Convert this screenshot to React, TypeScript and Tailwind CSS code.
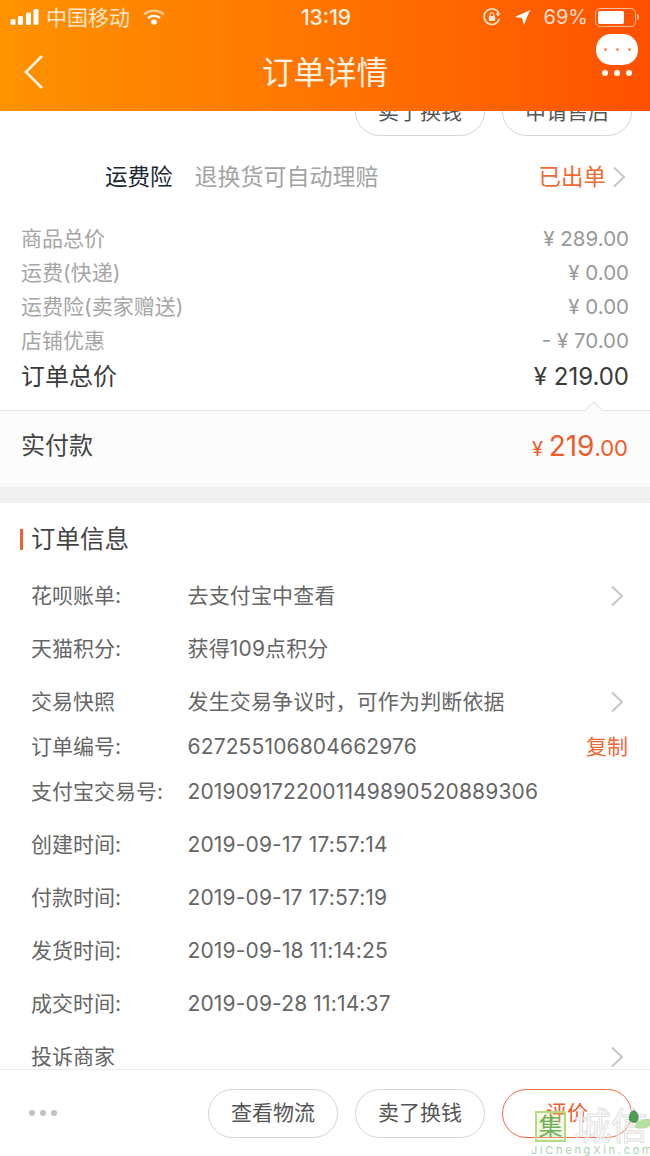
import type { ReactNode } from 'react';

const font = { fontFamily: '"Inter", "Noto Sans CJK SC", sans-serif' };

const priceRows = [
  { label: '商品总价', value: '¥ 289.00' },
  { label: '运费(快递)', value: '¥ 0.00' },
  { label: '运费险(卖家赠送)', value: '¥ 0.00' },
  { label: '店铺优惠', value: '- ¥ 70.00' },
];

const infoRows = [
  { label: '花呗账单:', value: '去支付宝中查看', arrow: true, h: 'h-[53px]' },
  { label: '天猫积分:', value: '获得109点积分', h: 'h-[53px]' },
  { label: '交易快照', value: '发生交易争议时\uFF0C可作为判断依据', arrow: true, h: 'h-[53px]' },
  { label: '订单编号:', value: '627255106804662976', copy: true, h: 'h-[37px]' },
  { label: '支付宝交易号:', value: '2019091722001149890520889306', h: 'h-[53px]' },
  { label: '创建时间:', value: '2019-09-17 17:57:14', h: 'h-[53px]' },
  { label: '付款时间:', value: '2019-09-17 17:57:19', h: 'h-[53px]' },
  { label: '发货时间:', value: '2019-09-18 11:14:25', h: 'h-[53px]' },
  { label: '成交时间:', value: '2019-09-28 11:14:37', h: 'h-[53px]' },
  { label: '投诉商家', value: '', arrow: true, h: 'h-[53px]' },
];

const Chevron = ({ className }: { className?: string }) => (
  <svg className={className} width="14" height="22" viewBox="0 0 14 22" fill="none" stroke="#c6c6c6" strokeWidth="2">
    <path d="M2 1.500L12 11 2 20.500" />
  </svg>
);

const StatusBar = () => (
  <div className="grid h-[34px] grid-cols-3 items-center pl-[10px] pr-[11px] text-white">
    <div className="flex items-center">
      <svg width="30" height="20" viewBox="0 0 30 20" fill="white">
        <rect x="0.5" y="12" width="5" height="6" rx="1.5" />
        <rect x="8" y="9" width="5" height="9" rx="1.5" />
        <rect x="16" y="5.5" width="5" height="12.5" rx="1.5" />
        <rect x="23.5" y="2" width="5" height="16" rx="1.5" />
      </svg>
      <span className="ml-[6px] whitespace-nowrap text-[21px] leading-none opacity-80">中国移动</span>
      <svg className="ml-[12px] shrink-0" width="24" height="18" viewBox="0 0 24 18" fill="none" stroke="white" strokeWidth="2.4">
        <path d="M2 6.5C8 1.500 16 1.500 22 6.500" opacity="0.55" />
        <path d="M6 10C9.500 7.200 14.500 7.200 18 10" />
        <circle cx="12" cy="14" r="1.600" fill="white" />
      </svg>
    </div>
    <div className="pl-[3px] text-center text-[21px] font-medium leading-none text-[#fff3e6]">13:19</div>
    <div className="flex items-center justify-end">
      <svg width="20" height="20" viewBox="0 0 22 22" fill="none" stroke="white" strokeWidth="1.700" opacity="0.85">
        <path d="M19 13A8.500 8.500 0 1 1 18.500 7" />
        <path d="M20.500 7.500L17 10.500 15.500 6.500Z" fill="white" stroke="none" />
        <rect x="7.500" y="10" width="7" height="5.500" rx="1" fill="white" stroke="none" />
        <path d="M9 10V8.300a2 2 0 0 1 4 0V10" strokeWidth="1.200" />
      </svg>
      <svg className="ml-[12px]" width="17" height="17" viewBox="0 0 18 18" fill="white">
        <path d="M17 1L1 8.500 8.500 9.500 10.500 17Z" />
      </svg>
      <span className="ml-[13px] text-[20px] leading-none opacity-80">69%</span>
      <div className="ml-[7px] flex h-[19px] w-[41px] items-center rounded-[5px] border border-white/60 p-[2px]">
        <div className="h-full w-[26px] rounded-[2px] bg-white" />
      </div>
      <div className="ml-[1px] h-[6px] w-[2px] rounded-r bg-white/60" />
    </div>
  </div>
);

const Header = () => (
  <header className="relative z-10 h-[111px] shrink-0 bg-gradient-to-r from-[#ff9200] to-[#ff5000]">
    <StatusBar />
    <div className="relative flex h-[77px] items-center justify-center text-[31.500px] leading-none text-[#fff3e6]">
      <svg className="absolute left-[23px] top-[20px]" width="22" height="36" viewBox="0 0 22 36" fill="none" stroke="#fff3e6" strokeWidth="2.600">
        <path d="M19 2L3 18 19 34" />
      </svg>
      订单详情
      <div className="absolute right-[12px] top-[0px] flex w-[42px] flex-col items-center">
        <div className="flex h-[31px] w-[42px] items-center justify-center gap-[9px] rounded-[15px] bg-white">
          <span className="size-[3px] rounded-full bg-[#ff8a50]" />
          <span className="size-[3px] rounded-full bg-[#ff8a50]" />
          <span className="size-[3px] rounded-full bg-[#ff8a50]" />
        </div>
        <div className="mt-[5px] flex gap-[6px]">
          <span className="size-[6px] rounded-full bg-white" />
          <span className="size-[6px] rounded-full bg-white" />
          <span className="size-[6px] rounded-full bg-white" />
        </div>
      </div>
    </div>
  </header>
);

const Pill = ({ children, active }: { children: ReactNode; active?: boolean }) => (
  <button
    className={`flex h-[49px] w-[130px] items-center justify-center rounded-full border text-[21px] ${
      active ? 'border-[#f0693c] text-[#ee5a2a]' : 'border-[#d4d4d4] text-[#555555]'
    }`}
  >
    {children}
  </button>
);

export default function App() {
  return (
    <div className="flex h-[1156px] w-[650px] flex-col overflow-hidden bg-white" style={font}>
      <Header />
      <main className="min-h-0 flex-1 overflow-hidden">
        <div className="-mt-[24px] flex h-[49px] justify-end gap-[17px] pr-[18px]">
          <Pill>卖了换钱</Pill>
          <Pill>申请售后</Pill>
        </div>

        <div className="flex h-[82px] items-center pl-[105px] pr-[24px]">
          <span className="text-[22.500px] text-[#1c2733]">运费险</span>
          <span className="ml-[22px] text-[23px] text-[#a3a3a3]">退换货可自动理赔</span>
          <span className="ml-auto text-[22.500px] text-[#ee6a35]">已出单</span>
          <Chevron className="ml-[6px]" />
        </div>

        <div className="flex flex-col px-[21px] pt-[4px]">
          {priceRows.map((row) => (
            <div key={row.label} className="flex h-[34px] items-center justify-between text-[21px] text-[#a6a6a6]">
              <span>{row.label}</span>
              <span className="text-[20.500px] text-[#999999]">{row.value}</span>
            </div>
          ))}
          <div className="flex h-[38px] items-center justify-between text-[24px] text-[#3a3a3a]">
            <span>订单总价</span>
            <span>¥ 219.00</span>
          </div>
        </div>

        <div className="relative mt-[14px] flex h-[77px] items-center justify-between border-t border-[#e2e2e2] bg-[#fcfcfc] pb-[6px] pl-[21px] pr-[22px]">
          <div className="absolute right-[50px] top-[-7px] size-[13px] rotate-45 border-l border-t border-[#e2e2e2] bg-[#fcfcfc]" />
          <span className="text-[24px] text-[#444444]">实付款</span>
          <span className="text-[#ee5a2a]">
            <span className="text-[20px]">¥ </span>
            <span className="text-[28px]">219</span>
            <span className="text-[22px]">.00</span>
          </span>
        </div>
        <div className="h-[16px] bg-[#f0f0f0]" />

        <div className="flex h-[66px] items-center pl-[20px] pt-[6px]">
          <div className="h-[21px] w-[3px] bg-[#f0622a]" />
          <h2 className="ml-[8px] text-[24.500px] text-[#444444]">订单信息</h2>
        </div>

        <div className="pl-[31px] pr-[22px] text-[21px]">
          {infoRows.map((row) => (
            <div key={row.label} className={`flex items-center ${row.h}`}>
              <span className="w-[156.500px] shrink-0 text-[#666666]">{row.label}</span>
              <span className="tracking-[0.15px] text-[#666666]">{row.value}</span>
              {row.arrow && <Chevron className="ml-auto mr-[4px]" />}
              {row.copy && <span className="ml-auto text-[#ee6a35]">复制</span>}
            </div>
          ))}
        </div>
      </main>

      <footer className="relative z-10 flex h-[87px] shrink-0 items-center border-t border-[#ececec] bg-white pl-[29px] pr-[18px]">
        <div className="flex gap-[5px]">
          <span className="size-[6px] rounded-full bg-[#c2c2c2]" />
          <span className="size-[6px] rounded-full bg-[#c2c2c2]" />
          <span className="size-[6px] rounded-full bg-[#c2c2c2]" />
        </div>
        <div className="ml-auto flex gap-[17px]">
          <Pill>查看物流</Pill>
          <Pill>卖了换钱</Pill>
          <Pill active>评价</Pill>
        </div>
        <div className="absolute left-[535px] top-[38px] flex items-center">
          <div className="flex size-[31px] items-center justify-center border-2 border-[#b5dd80] bg-[#d9f0b0]/30 text-[24px] leading-none text-[#6fb25a]">
            集
          </div>
          <span className="ml-[8px] whitespace-nowrap text-[37px] leading-none text-white/50 [-webkit-text-stroke:1px_#e0e0e0]">城信</span>
        </div>
        <svg className="absolute left-[628px] top-[40px]" width="22" height="20" viewBox="0 0 22 20">
          <path d="M11 11c3-1 7-3 11-2v7c-4 3-12 4-15 1 0-3 2-5 4-6Z" fill="#b5e0a0" />
          <path d="M1 10C0 5 3 1 6 0c5 3 6 8 3 12-2 2-6 1-8-2Z" fill="#4f9a55" />
        </svg>
        <div className="absolute left-[531px] top-[75px] whitespace-nowrap text-[11px] leading-none tracking-[2.700px] text-[#a9d3ae]">
          JiChengXin.com
        </div>
      </footer>
    </div>
  );
}
